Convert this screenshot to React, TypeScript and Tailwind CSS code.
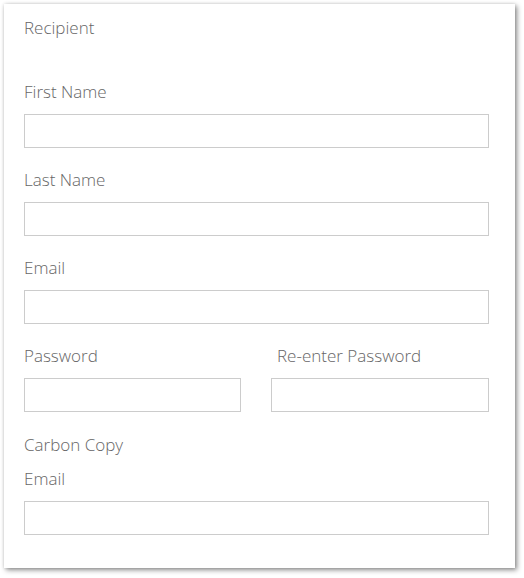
const font = { fontFamily: '"Open Sans", "Liberation Sans", sans-serif' };

const Field = ({ label, className = "", labelClass = "" }: { label: string; className?: string; labelClass?: string }) => (
  <div className={`flex flex-col ${className}`}>
    <label className={`text-[17px] leading-6 font-light text-[#666] ${labelClass}`}>{label}</label>
    <input type="text" className="mt-[10px] h-[34px] w-full border border-[#ccc] bg-white outline-none" />
  </div>
);

export default function App() {
  return (
    <div className="min-h-screen bg-white p-1" style={font}>
      <div className="w-[511px] h-[564px] bg-white pl-5 pr-[26px] pt-3 shadow-[2px_2px_5px_rgba(0,0,0,0.45),0_0_3px_rgba(0,0,0,0.12)]">
        <h2 className="text-[17px] leading-6 font-light text-[#666]">Recipient</h2>

        <Field label="First Name" className="mt-10" />
        <Field label="Last Name" className="mt-[20px]" />
        <Field label="Email" className="mt-[20px]" />

        <div className="mt-[20px] grid grid-cols-[217px_1fr] gap-[30px]">
          <Field label="Password" />
          <Field label="Re-enter Password" labelClass="pl-[6px]" />
        </div>

        <h3 className="mt-[21px] text-[17px] leading-6 font-light text-[#666]">Carbon Copy</h3>
        <Field label="Email" className="mt-[10px]" />
      </div>
    </div>
  );
}
